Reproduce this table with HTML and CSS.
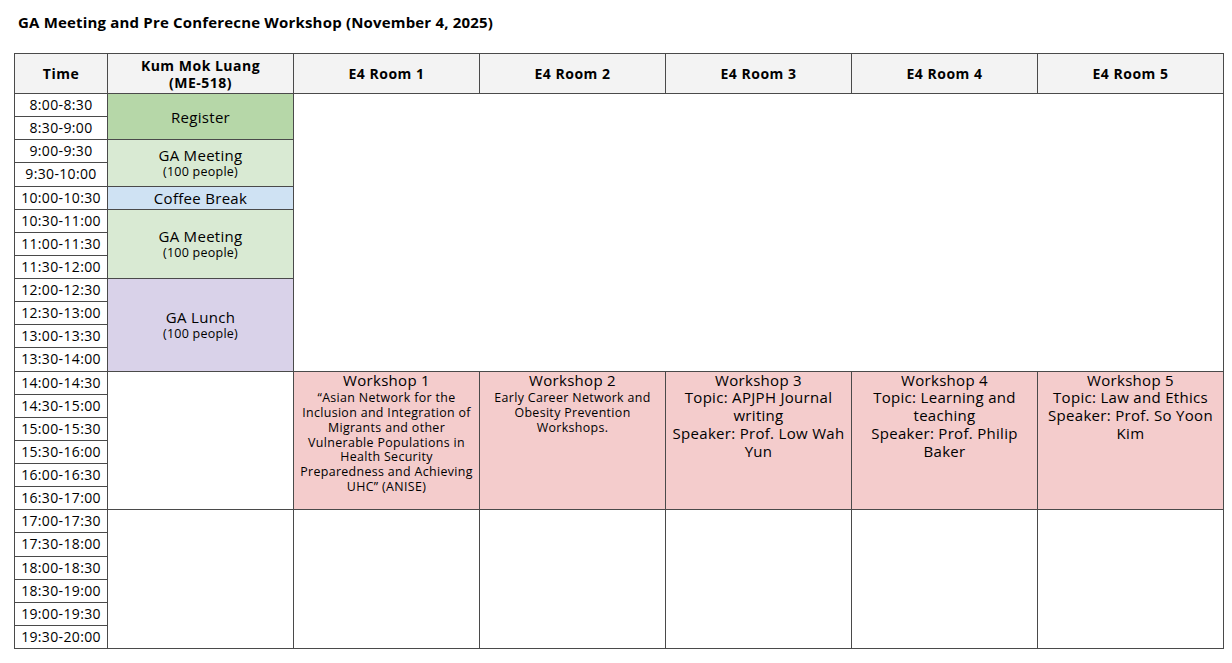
FILE: index.html
```html
<!DOCTYPE html>
<html lang="en">
<head>
<meta charset="utf-8">
<title>GA Meeting and Pre Conference Workshop</title>
<link rel="stylesheet" href="styles.css">
</head>
<body>
<h1 class="title">GA Meeting and Pre Conferecne Workshop (November 4, 2025)</h1>
<table class="sched">
  <colgroup>
    <col class="c-time">
    <col class="c-room"><col class="c-room"><col class="c-room"><col class="c-room"><col class="c-room"><col class="c-room">
  </colgroup>
  <thead>
    <tr class="head">
      <th>Time</th>
      <th>Kum Mok Luang<br>(ME-518)</th>
      <th>E4 Room 1</th>
      <th>E4 Room 2</th>
      <th>E4 Room 3</th>
      <th>E4 Room 4</th>
      <th>E4 Room 5</th>
    </tr>
  </thead>
  <tbody>
    <tr><td class="t">8:00-8:30</td><td class="ev register" rowspan="2">Register</td><td class="blank" rowspan="12" colspan="5"></td></tr>
    <tr><td class="t">8:30-9:00</td></tr>
    <tr><td class="t">9:00-9:30</td><td class="ev meet" rowspan="2">GA Meeting<span class="sub">(100 people)</span></td></tr>
    <tr><td class="t">9:30-10:00</td></tr>
    <tr><td class="t">10:00-10:30</td><td class="ev coffee">Coffee Break</td></tr>
    <tr><td class="t">10:30-11:00</td><td class="ev meet" rowspan="3">GA Meeting<span class="sub">(100 people)</span></td></tr>
    <tr><td class="t">11:00-11:30</td></tr>
    <tr><td class="t">11:30-12:00</td></tr>
    <tr><td class="t">12:00-12:30</td><td class="ev lunch" rowspan="4">GA Lunch<span class="sub">(100 people)</span></td></tr>
    <tr><td class="t">12:30-13:00</td></tr>
    <tr><td class="t">13:00-13:30</td></tr>
    <tr><td class="t">13:30-14:00</td></tr>
    <tr>
      <td class="t">14:00-14:30</td>
      <td class="blank" rowspan="6"></td>
      <td class="ws" rowspan="6"><span class="ws-title">Workshop 1</span><span class="small">“Asian Network for the<br>Inclusion and Integration of<br>Migrants and other<br>Vulnerable Populations in<br>Health Security<br>Preparedness and Achieving<br>UHC” (ANISE)</span></td>
      <td class="ws" rowspan="6"><span class="ws-title">Workshop 2</span><span class="small">Early Career Network and<br>Obesity Prevention<br>Workshops.</span></td>
      <td class="ws" rowspan="6"><span class="ws-title">Workshop 3</span>Topic: APJPH Journal<br>writing<br>Speaker: Prof. Low Wah<br>Yun</td>
      <td class="ws" rowspan="6"><span class="ws-title">Workshop 4</span>Topic: Learning and<br>teaching<br>Speaker: Prof. Philip<br>Baker</td>
      <td class="ws" rowspan="6"><span class="ws-title">Workshop 5</span>Topic: Law and Ethics<br>Speaker: Prof. So Yoon<br>Kim</td>
    </tr>
    <tr><td class="t">14:30-15:00</td></tr>
    <tr><td class="t">15:00-15:30</td></tr>
    <tr><td class="t">15:30-16:00</td></tr>
    <tr><td class="t">16:00-16:30</td></tr>
    <tr><td class="t">16:30-17:00</td></tr>
    <tr>
      <td class="t">17:00-17:30</td>
      <td class="blank" rowspan="6"></td>
      <td class="blank" rowspan="6"></td>
      <td class="blank" rowspan="6"></td>
      <td class="blank" rowspan="6"></td>
      <td class="blank" rowspan="6"></td>
      <td class="blank" rowspan="6"></td>
    </tr>
    <tr><td class="t">17:30-18:00</td></tr>
    <tr><td class="t">18:00-18:30</td></tr>
    <tr><td class="t">18:30-19:00</td></tr>
    <tr><td class="t">19:00-19:30</td></tr>
    <tr><td class="t">19:30-20:00</td></tr>
  </tbody>
</table>
</body>
</html>
```

FILE: styles.css
```css
html, body {
  margin: 0;
  padding: 0;
  background: #ffffff;
  color: #000000;
  font-family: "Open Sans", "Liberation Sans", sans-serif;
}

.title {
  margin: 12px 0 0 18px;
  font-size: 15px;
  font-weight: 700;
  line-height: 20px;
  letter-spacing: 0.18px;
}

.sched {
  margin: 21px 0 0 14px;
  border-collapse: collapse;
  table-layout: fixed;
  width: 1210px;
  font-size: 15px;
  letter-spacing: 0.3px;
}

.c-time { width: 93px; }
.c-room { width: 186px; }

.sched th,
.sched td {
  border: 1px solid #4a4a4a;
  padding: 0;
  text-align: center;
}

.head th {
  height: 39px;
  background: #f3f3f3;
  font-weight: 700;
  font-size: 14px;
  letter-spacing: 0.5px;
  line-height: 17px;
  vertical-align: middle;
}

.sched tbody tr {
  height: 23.125px;
}

.t {
  font-size: 14px;
  letter-spacing: 0.35px;
  line-height: 20px;
  white-space: nowrap;
  vertical-align: middle;
}

.ev {
  vertical-align: middle;
  line-height: 16px;
}

.register {
  background: #b6d7a8;
  padding-bottom: 2px;
}

.sub {
  display: block;
  font-size: 12.5px;
  letter-spacing: 0.25px;
  line-height: 15px;
  margin-top: 1px;
}

.meet { background: #d9ead3; }
.coffee { background: #cfe2f3; }
.lunch { background: #d9d2e9; }

.blank { background: #ffffff; }

.ws {
  background: #f4cccc;
  vertical-align: top;
  padding-top: 2px;
  line-height: 17.8px;
}

.ws-title {
  display: block;
}

.small {
  display: block;
  margin-top: 2px;
  font-size: 12.4px;
  letter-spacing: 0.35px;
  line-height: 14.8px;
}
```
